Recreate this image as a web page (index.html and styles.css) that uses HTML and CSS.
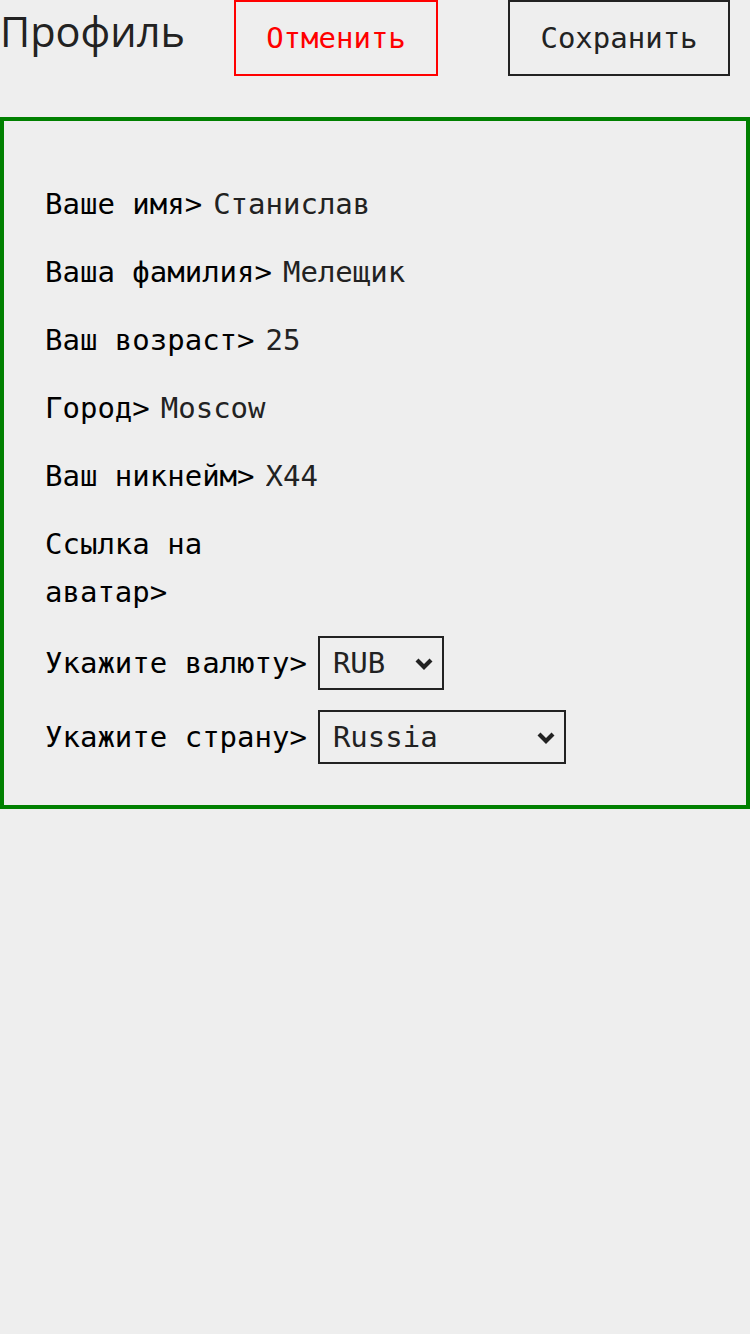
FILE: index.html
```html
<!DOCTYPE html>
<html lang="ru">
<head>
<meta charset="utf-8">
<link rel="stylesheet" href="styles.css">
</head>
<body>
<header class="header">
  <h1 class="title">Профиль</h1>
  <button class="btn btn-cancel">Отменить</button>
  <button class="btn btn-save">Сохранить</button>
</header>
<form class="form">
  <div class="row"><label class="label">Ваше имя&gt;</label><input class="value" value="Станислав"></div>
  <div class="row"><label class="label">Ваша фамилия&gt;</label><input class="value" value="Мелещик"></div>
  <div class="row"><label class="label">Ваш возраст&gt;</label><input class="value" value="25"></div>
  <div class="row"><label class="label">Город&gt;</label><input class="value" value="Moscow"></div>
  <div class="row"><label class="label">Ваш никнейм&gt;</label><input class="value" value="X44"></div>
  <div class="row"><label class="label label-wrap">Ссылка на аватар&gt;</label><input class="value" value=""></div>
  <div class="row"><label class="label">Укажите валюту&gt;</label>
    <div class="select select-currency"><span>RUB</span>
      <svg class="chev" width="20" height="13" viewBox="0 0 20 13"><path d="M3 3 L10 10 L17 3" fill="none" stroke="#222" stroke-width="4.2"/></svg>
    </div>
  </div>
  <div class="row"><label class="label">Укажите страну&gt;</label>
    <div class="select select-country"><span>Russia</span>
      <svg class="chev" width="20" height="13" viewBox="0 0 20 13"><path d="M3 3 L10 10 L17 3" fill="none" stroke="#222" stroke-width="4.2"/></svg>
    </div>
  </div>
</form>
</body>
</html>
```
FILE: styles.css
```css
html, body {
  margin: 0;
  padding: 0;
  background: #eeeeee;
}
body {
  width: 750px;
  height: 1334px;
}
.header {
  display: flex;
  align-items: flex-start;
  height: 76px;
}
.title {
  margin: 0;
  font-family: "Open Sans", sans-serif;
  font-weight: 400;
  font-size: 41.5px;
  line-height: 63px;
  color: #222;
  width: 234px;
}
.btn {
  box-sizing: border-box;
  height: 76px;
  background: transparent;
  font-family: "DejaVu Sans Mono", monospace;
  font-size: 29px;
  padding: 0;
  margin: 0;
}
.btn-cancel {
  width: 204px;
  border: 2px solid #ff0000;
  color: #ff0000;
}
.btn-save {
  width: 222px;
  margin-left: 70px;
  border: 2px solid #222;
  color: #222;
}
.form {
  margin-top: 41px;
  border: 4px solid #008000;
  padding: 39px 41px 21px;
  font-family: "DejaVu Sans Mono", monospace;
  font-size: 29px;
}
.row {
  display: flex;
  align-items: center;
  gap: 11px;
  margin: 20px 0;
}
.label {
  color: #000;
  line-height: 48px;
  white-space: pre-wrap;
}
.label-wrap {
  max-width: 170px;
}
.value {
  font: inherit;
  color: #222;
  border: none;
  background: transparent;
  padding: 0;
  outline: none;
  width: 300px;
  line-height: 48px;
  height: 48px;
}
.select {
  box-sizing: border-box;
  height: 54px;
  border: 2px solid #222;
  display: flex;
  align-items: center;
  justify-content: space-between;
  padding: 0 8px 0 13px;
  color: #222;
}
.select-currency {
  width: 126px;
}
.select-country {
  width: 248px;
}
.chev {
  display: block;
}
```
